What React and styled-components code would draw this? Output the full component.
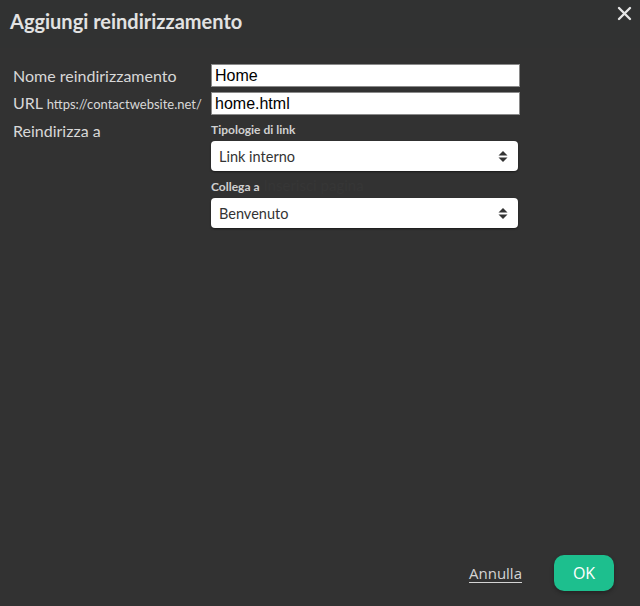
import React from 'react'
import styled, { createGlobalStyle } from 'styled-components';

const Global = createGlobalStyle`
    html, body{
        margin: 0;
        padding: 0;
        background: #323232;
    }
    *{
        box-sizing: border-box;
    }
`;

const fields = [
    { label: "Tipologie di link", value: "Link interno" },
    { label: "Collega a", value: "Benvenuto", hint: "Inserisci pagina" },
]

const Arrows = () => (
    <svg width="10" height="13" viewBox="0 0 10 13">
        <path d="M5 1 L9.5 5.5 L0.5 5.5 Z" fill="#333" />
        <path d="M5 12 L9.5 7.5 L0.5 7.5 Z" fill="#333" />
    </svg>
)

const App = () => {
    return (
        <Dialog>
            <Global />
            <Header>
                <h1>Aggiungi reindirizzamento</h1>
                <Close>
                    <svg width="15" height="15" viewBox="0 0 15 15">
                        <path d="M2 2 L13 13 M13 2 L2 13" stroke="#e6e6e6" strokeWidth="2.4" strokeLinecap="round" />
                    </svg>
                </Close>
            </Header>
            <Body>
                <Row>
                    <Label>Nome reindirizzamento</Label>
                    <TextInput defaultValue="Home" />
                </Row>
                <Row>
                    <Label>URL <small>https://contactwebsite.net/</small></Label>
                    <TextInput defaultValue="home.html" />
                </Row>
                <Row $top>
                    <Label>Reindirizza a</Label>
                    <Group>
                        {fields.map((f) => (
                            <Field key={f.label}>
                                <FieldTitle>
                                    {f.label}
                                    {f.hint && <span>{f.hint}</span>}
                                </FieldTitle>
                                <Select>
                                    <p>{f.value}</p>
                                    <Arrows />
                                </Select>
                            </Field>
                        ))}
                    </Group>
                </Row>
            </Body>
            <Footer>
                <CancelLink>Annulla</CancelLink>
                <OkButton>OK</OkButton>
            </Footer>
        </Dialog>
    )
}

const Dialog = styled.div`
    width: 640px;
    height: 606px;
    display: flex;
    flex-direction: column;
    background: #323232;
    font-family: Lato, "Open Sans", sans-serif;
`;

const Header = styled.div`
    display: flex;
    justify-content: space-between;
    align-items: flex-start;
    height: 48px;
    padding: 9px 8px 0 10px;
    background: #313232;
    h1{
        margin: 0;
        color: #e2e2e2;
        font-size: 20px;
        font-weight: 700;
        line-height: 24px;
    }
`;

const Close = styled.div`
    display: flex;
    margin-top: -3px;
    cursor: pointer;
`;

const Body = styled.div`
    flex: 1;
    display: flex;
    flex-direction: column;
    gap: 5px;
    padding: 16px 0 0 13px;
`;

const Row = styled.div`
    display: flex;
    align-items: ${({ $top }) => ($top ? 'flex-start' : 'center')};
`;

const Label = styled.div`
    width: 198px;
    flex-shrink: 0;
    color: #d8d8d8;
    font-size: 16px;
    line-height: 22px;
    white-space: nowrap;
    small{
        font-size: 13px;
    }
`;

const TextInput = styled.input`
    width: 309px;
    height: 23px;
    padding: 0 3px;
    border: 1px solid #8a8a8a;
    background: #fff;
    color: #000;
    font-family: "Liberation Sans", Arial, sans-serif;
    font-size: 16px;
    outline: none;
`;

const Group = styled.div`
    display: flex;
    flex-direction: column;
    gap: 6px;
    padding-top: 2px;
`;

const Field = styled.div`
    display: flex;
    flex-direction: column;
    gap: 3px;
`;

const FieldTitle = styled.div`
    color: #d0d0d0;
    font-size: 12px;
    font-weight: 700;
    line-height: 16px;
    span{
        margin-left: 4px;
        color: #363636;
        font-size: 15px;
        font-weight: 400;
    }
`;

const Select = styled.div`
    width: 307px;
    height: 30px;
    display: flex;
    justify-content: space-between;
    align-items: center;
    padding: 0 10px 0 8px;
    border-radius: 4px;
    background: #fff;
    box-shadow: 0px 1px 2px 0px rgba(0, 0, 0, 0.5);
    cursor: pointer;
    p{
        margin: 0;
        color: #333;
        font-size: 14.5px;
    }
`;

const Footer = styled.div`
    display: flex;
    justify-content: flex-end;
    align-items: center;
    gap: 32px;
    padding: 0 26px 15px 0;
`;

const CancelLink = styled.a`
    color: #d4d4d4;
    font-family: "Open Sans", Lato, sans-serif;
    font-size: 15px;
    text-decoration: underline;
    text-underline-offset: 3px;
    cursor: pointer;
`;

const OkButton = styled.button`
    width: 60px;
    height: 36px;
    border: none;
    border-radius: 10px;
    background: #1dbf8e;
    color: #fff;
    font-family: "Open Sans", Lato, sans-serif;
    font-size: 16px;
    box-shadow: 0px 2px 4px 0px rgba(0, 0, 0, 0.3);
    cursor: pointer;
`;

export default App
